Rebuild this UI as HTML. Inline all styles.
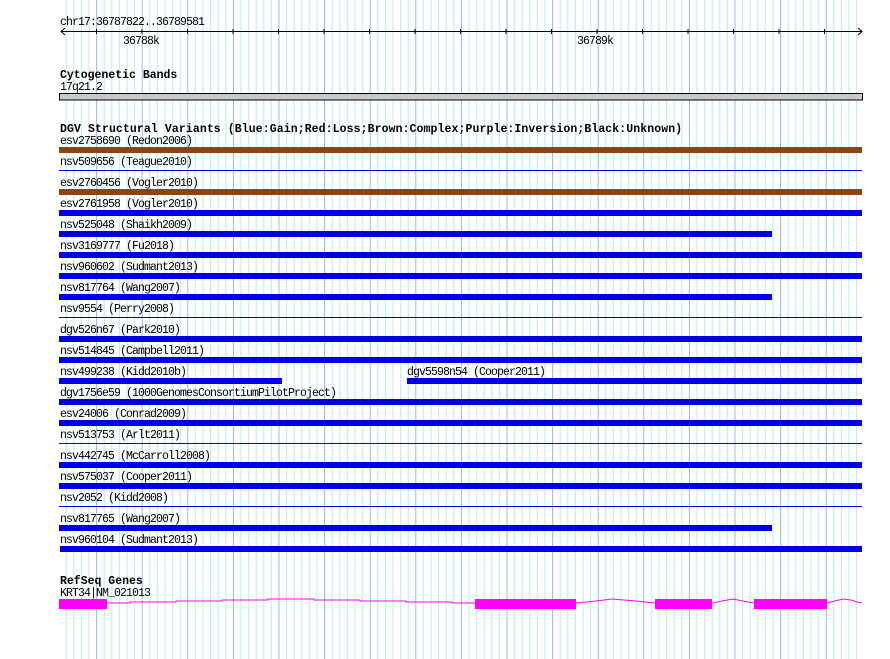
<!DOCTYPE html>
<html><head><meta charset="utf-8"><style>
html,body{margin:0;padding:0;background:#fff;width:890px;height:659px;overflow:hidden}
svg{display:block}
text{font-family:"Liberation Mono",monospace;font-size:11.5px;letter-spacing:-0.9px;fill:#000}
.h{font-weight:bold;font-size:11.5px;letter-spacing:0px}
.d{letter-spacing:0.09px}
</style></head><body>
<svg width="890" height="659" viewBox="0 0 890 659" xmlns="http://www.w3.org/2000/svg">
<defs>
<pattern id="g" x="141.7" y="0" width="45.6" height="659" patternUnits="userSpaceOnUse">
<rect x="0" y="0" width="1" height="659" fill="#90bce8"/>
<rect x="7.6" y="0" width="1" height="659" fill="#b2eeee"/>
<rect x="15.2" y="0" width="1" height="659" fill="#b2eeee"/>
<rect x="22.8" y="0" width="1" height="659" fill="#b2eeee"/>
<rect x="30.4" y="0" width="1" height="659" fill="#b2eeee"/>
<rect x="38" y="0" width="1" height="659" fill="#b2eeee"/>
</pattern>
</defs>
<rect x="61" y="0" width="800" height="659" fill="url(#g)"/>

<text x="60" y="25">chr17:36787822..36789581</text>
<line x1="61" y1="31.5" x2="862" y2="31.5" stroke="#000" stroke-width="1"/>
<polyline points="65,28 61,31.5 65,35" fill="none" stroke="#000"/>
<polyline points="858,28 862,31.5 858,35" fill="none" stroke="#000"/>
<g stroke="#000">
<line x1="96.5" y1="29" x2="96.5" y2="34"/><line x1="142" y1="29" x2="142" y2="34"/>
<line x1="187.5" y1="29" x2="187.5" y2="34"/><line x1="233" y1="29" x2="233" y2="34"/>
<line x1="278.5" y1="29" x2="278.5" y2="34"/><line x1="324" y1="29" x2="324" y2="34"/>
<line x1="369.5" y1="29" x2="369.5" y2="34"/><line x1="415" y1="29" x2="415" y2="34"/>
<line x1="460.5" y1="29" x2="460.5" y2="34"/><line x1="506" y1="29" x2="506" y2="34"/>
<line x1="551.5" y1="29" x2="551.5" y2="34"/><line x1="597" y1="29" x2="597" y2="34"/>
<line x1="642.5" y1="29" x2="642.5" y2="34"/><line x1="688" y1="29" x2="688" y2="34"/>
<line x1="733.5" y1="29" x2="733.5" y2="34"/><line x1="779" y1="29" x2="779" y2="34"/>
<line x1="824.5" y1="29" x2="824.5" y2="34"/>
</g>
<text x="123" y="44">36788k</text>
<text x="577" y="44">36789k</text>

<text class="h" x="60" y="78">Cytogenetic Bands</text>
<text x="60" y="90">17q21.2</text>
<rect x="59.5" y="93.5" width="803" height="6.5" fill="#c8c8c8" stroke="#000" stroke-width="1"/>

<text class="h d" x="60" y="132">DGV Structural Variants (Blue:Gain;Red:Loss;Brown:Complex;Purple:Inversion;Black:Unknown)</text>
<g>
<text x="60" y="144">esv2758690 (Redon2006)</text>
<rect x="59" y="147" width="803" height="6" fill="#8b4513"/>
<text x="60" y="165">nsv509656 (Teague2010)</text>
<rect x="59" y="170" width="803" height="1" fill="#0000e0"/>
<text x="60" y="186">esv2760456 (Vogler2010)</text>
<rect x="59" y="189" width="803" height="6" fill="#8b4513"/>
<text x="60" y="207">esv2761958 (Vogler2010)</text>
<rect x="59" y="210" width="803" height="6" fill="#0000e0"/>
<text x="60" y="228">nsv525048 (Shaikh2009)</text>
<rect x="59" y="231" width="713" height="6" fill="#0000e0"/>
<text x="60" y="249">nsv3169777 (Fu2018)</text>
<rect x="59" y="252" width="803" height="6" fill="#0000e0"/>
<text x="60" y="270">nsv960602 (Sudmant2013)</text>
<rect x="59" y="273" width="803" height="6" fill="#0000e0"/>
<text x="60" y="291">nsv817764 (Wang2007)</text>
<rect x="59" y="294" width="713" height="6" fill="#0000e0"/>
<text x="60" y="312">nsv9554 (Perry2008)</text>
<rect x="59" y="317" width="803" height="1" fill="#0000e0"/>
<text x="60" y="333">dgv526n67 (Park2010)</text>
<rect x="59" y="336" width="803" height="6" fill="#0000e0"/>
<text x="60" y="354">nsv514845 (Campbell2011)</text>
<rect x="59" y="357" width="803" height="6" fill="#0000e0"/>
<text x="60" y="375">nsv499238 (Kidd2010b)</text>
<rect x="59" y="378" width="223" height="6" fill="#0000e0"/>
<text x="407" y="375">dgv5598n54 (Cooper2011)</text>
<rect x="407" y="378" width="455" height="6" fill="#0000e0"/>
<text x="60" y="396">dgv1756e59 (1000GenomesConsortiumPilotProject)</text>
<rect x="59" y="399" width="803" height="6" fill="#0000e0"/>
<text x="60" y="417">esv24006 (Conrad2009)</text>
<rect x="59" y="420" width="803" height="6" fill="#0000e0"/>
<text x="60" y="438">nsv513753 (Arlt2011)</text>
<rect x="59" y="443" width="803" height="1" fill="#0000e0"/>
<text x="60" y="459">nsv442745 (McCarroll2008)</text>
<rect x="59" y="462" width="803" height="6" fill="#0000e0"/>
<text x="60" y="480">nsv575037 (Cooper2011)</text>
<rect x="59" y="483" width="803" height="6" fill="#0000e0"/>
<text x="60" y="501">nsv2052 (Kidd2008)</text>
<rect x="59" y="506" width="803" height="1" fill="#0000e0"/>
<text x="60" y="522">nsv817765 (Wang2007)</text>
<rect x="59" y="525" width="713" height="6" fill="#0000e0"/>
<text x="60" y="543">nsv960104 (Sudmant2013)</text>
<rect x="60" y="546" width="802" height="6" fill="#0000e0"/>
</g>

<text class="h" x="60" y="584">RefSeq Genes</text>
<text x="60" y="596">KRT34|NM_021013</text>
<polyline fill="none" stroke="#ff00ff" stroke-width="1"
 points="107,603 130,603 130,602 176,602 176,601 222,601 222,600 268,600 268,599 314,599 314,600 360,600 360,601 406,601 406,602 452,602 452,603 475,603"/>
<polyline fill="none" stroke="#ff00ff" stroke-width="1"
 points="576,603 586,602 596,601 612,599 624,600 636,601 646,602 655,603"/>
<polyline fill="none" stroke="#ff00ff" stroke-width="1"
 points="712,603 722,601 733,599 743,601 754,603"/>
<polyline fill="none" stroke="#ff00ff" stroke-width="1"
 points="827,603 835,601 843,599 851,600 857,602 862,603"/>
<rect x="59" y="599" width="48" height="10" fill="#ff00ff"/>
<rect x="475" y="599" width="101" height="10" fill="#ff00ff"/>
<rect x="655" y="599" width="57" height="10" fill="#ff00ff"/>
<rect x="754" y="599" width="73" height="10" fill="#ff00ff"/>
</svg>
</body></html>
